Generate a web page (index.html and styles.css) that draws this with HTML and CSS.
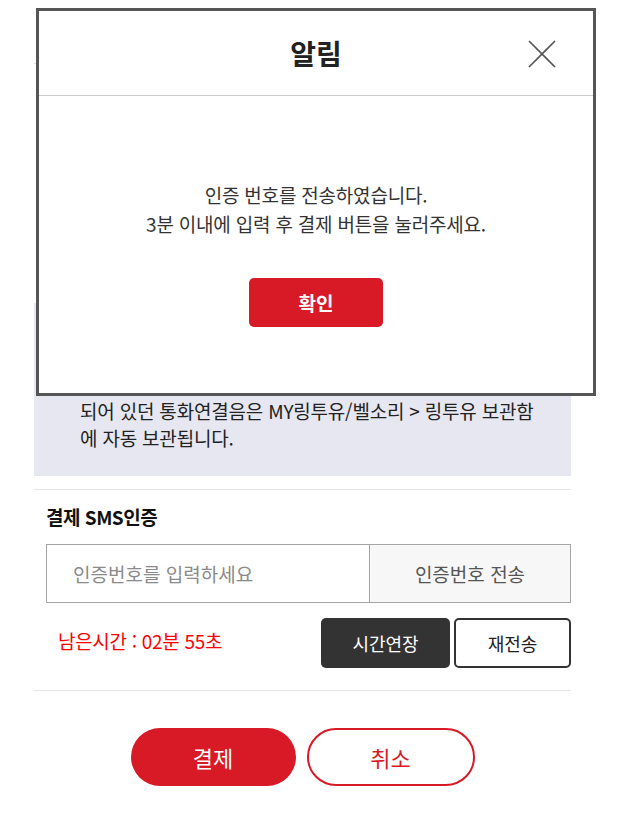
FILE: index.html
```html
<!DOCTYPE html>
<html lang="ko">
<head>
  <meta charset="UTF-8">
  <meta name="viewport" content="width=device-width, initial-scale=1.0">
  <title>이용권 결제</title>
  <link rel="stylesheet" href="styles.css">
</head>
<body>
  <div class="wrap">
    <header class="page-head"></header>

    <!-- 상품 정보 -->
    <section class="product">
      <dl>
        <dt>상품명</dt><dd>링투유 자유이용권</dd>
        <dt>이용기간</dt><dd>30일</dd>
        <dt>결제금액</dt><dd>3,300원</dd>
      </dl>
    </section>

    <div class="notice">
      <strong>유의사항</strong>
      <p>이용권 해지 후에도 남은 기간 동안 이용 가능합니다.</p>
      <p>해지 시 통화연결음으로 설정</p>
      <p>되어 있던 통화연결음은 MY링투유/벨소리 &gt; 링투유 보관함에 자동 보관됩니다.</p>
    </div>

    <!-- SMS 인증 -->
    <section class="sms">
      <h3>결제 SMS인증</h3>
      <div class="sms-input">
        <input type="text" placeholder="인증번호를 입력하세요">
        <button class="send-btn">인증번호 전송</button>
      </div>
      <div class="timer-row">
        <span class="timer">남은시간 : 02분 55초</span>
        <div class="timer-btns">
          <button class="extend-btn">시간연장</button>
          <button class="resend-btn">재전송</button>
        </div>
      </div>
    </section>

    <div class="actions">
      <button class="pay-btn">결제</button>
      <button class="cancel-btn">취소</button>
    </div>
  </div>

  <!-- 알림 모달 -->
  <div class="modal">
    <div class="modal-head">
      <h2>알림</h2>
      <button class="close-modal" aria-label="닫기">
        <svg width="28" height="28" viewBox="0 0 28 28">
          <path d="M1 1 L27 27 M27 1 L1 27" stroke="#555" stroke-width="1.6" fill="none"/>
        </svg>
      </button>
    </div>
    <div class="modal-body">
      <p>인증 번호를 전송하였습니다.<br>3분 이내에 입력 후 결제 버튼을 눌러주세요.</p>
      <button class="ok-btn">확인</button>
    </div>
  </div>
</body>
</html>
```

FILE: styles.css
```css
* {
  box-sizing: border-box;
}

body {
  margin: 0;
  font-family: "Noto Sans CJK KR", "Noto Sans", sans-serif;
  color: #222;
  background-color: #fff;
}

button {
  font-family: inherit;
  cursor: pointer;
}

.wrap {
  width: 537px;
  margin-left: 34px;
}

.page-head {
  height: 64px;
  border-bottom: 1px solid #ddd;
}

.product {
  height: 239px;
  padding: 20px 12px;
  overflow: hidden;
}

.product dl {
  display: grid;
  grid-template-columns: 100px 1fr;
  row-gap: 8px;
  margin: 0;
  font-size: 16px;
}

.product dd {
  margin: 0;
}

.notice {
  background-color: #e6e7f0;
  padding: 13px 25px 25px 46px;
  font-size: 19px;
  line-height: 27px;
  letter-spacing: -0.2px;
  color: #222;
}

.notice strong {
  display: block;
}

.notice p {
  margin: 0;
}

/* SMS 인증 */
.sms {
  margin-top: 13px;
  border-top: 1px solid #e5e5e5;
  border-bottom: 1px solid #e5e5e5;
  padding: 14px 0 22px 12px;
}

.sms h3 {
  margin: 0;
  font-size: 19px;
  line-height: 26px;
  letter-spacing: -0.5px;
  color: #111;
}

.sms-input {
  display: flex;
  height: 59px;
  margin-top: 14px;
  border: 1px solid #a5a5a5;
}

.sms-input input {
  flex: 1;
  min-width: 0;
  border: none;
  padding: 0 0 0 26px;
  font-family: inherit;
  font-size: 19px;
  color: #222;
  outline: none;
}

.sms-input input::placeholder {
  color: #8a8a8a;
}

.send-btn {
  width: 201px;
  border: none;
  border-left: 1px solid #a5a5a5;
  background-color: #f7f7f7;
  color: #555;
  font-size: 19px;
}

.timer-row {
  display: flex;
  align-items: center;
  justify-content: space-between;
  margin-top: 15px;
}

.timer {
  padding-left: 12px;
  margin-top: -6px;
  color: #ff0000;
  font-size: 19px;
  letter-spacing: -0.3px;
}

.timer-btns {
  display: flex;
  gap: 4px;
}

.extend-btn, .resend-btn {
  height: 50px;
  border-radius: 5px;
  font-size: 18px;
}

.extend-btn {
  width: 129px;
  border: none;
  background-color: #333;
  color: #fff;
}

.resend-btn {
  width: 117px;
  border: 2px solid #333;
  background-color: #fff;
  color: #222;
}

.actions {
  display: flex;
  justify-content: center;
  gap: 11px;
  margin-top: 37px;
}

.pay-btn, .cancel-btn {
  height: 58px;
  border-radius: 29px;
  font-size: 22px;
}

.pay-btn {
  width: 165px;
  border: none;
  background-color: #d81a27;
  color: #fff;
}

.cancel-btn {
  width: 168px;
  border: 2px solid #d81a27;
  background-color: #fff;
  color: #d81a27;
}

/* 모달 */
.modal {
  position: fixed;
  top: 8px;
  left: 0;
  right: 0;
  margin: 0 auto;
  width: 560px;
  height: 388px;
  background-color: #fff;
  border: 3px solid #555;
}

.modal-head {
  position: relative;
  display: flex;
  align-items: center;
  justify-content: center;
  height: 85px;
  border-bottom: 1px solid #ccc;
}

.modal-head h2 {
  margin: 0;
  font-size: 28px;
  line-height: 36px;
  color: #222;
}

.close-modal {
  position: absolute;
  top: 29px;
  right: 37px;
  width: 28px;
  height: 28px;
  padding: 0;
  border: none;
  background: none;
}

.close-modal svg {
  display: block;
}

.modal-body {
  padding-top: 84px;
  text-align: center;
}

.modal-body p {
  margin: 0;
  font-size: 19px;
  line-height: 29px;
  letter-spacing: -0.2px;
  color: #333;
}

.ok-btn {
  width: 134px;
  height: 49px;
  margin-top: 40px;
  border: none;
  border-radius: 5px;
  background-color: #d81a27;
  color: #fff;
  font-size: 19px;
  font-weight: 700;
}
```
